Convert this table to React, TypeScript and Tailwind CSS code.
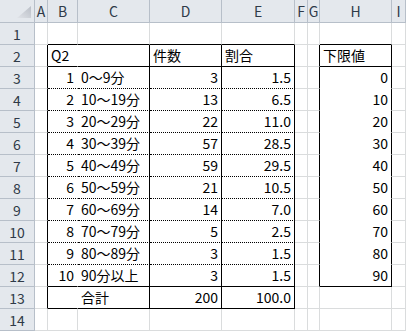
import React from 'react';

type Edge = 'grid' | 'black' | 'dotted' | 'white';

interface CellInfo {
  text?: string;
  align?: 'left' | 'right';
}

const COLS = ['A', 'B', 'C', 'D', 'E', 'F', 'G', 'H', 'I'];

// rows 3..12 of the frequency table
const freq: [string, string, number, string][] = [
  ['1', '0～9分', 3, '1.5'],
  ['2', '10～19分', 13, '6.5'],
  ['3', '20～29分', 22, '11.0'],
  ['4', '30～39分', 57, '28.5'],
  ['5', '40～49分', 59, '29.5'],
  ['6', '50～59分', 21, '10.5'],
  ['7', '60～69分', 14, '7.0'],
  ['8', '70～79分', 5, '2.5'],
  ['9', '80～89分', 3, '1.5'],
  ['10', '90分以上', 3, '1.5'],
];

const lowerBounds = ['0', '10', '20', '30', '40', '50', '60', '70', '80', '90'];

const inTable = (row: number) => row >= 2 && row <= 13;
const inBounds = (row: number) => row >= 2 && row <= 12;

// col: 1=A .. 9=I
function rightEdge(col: number, row: number): Edge {
  if (col === 1 && inTable(row)) return 'black';
  if (col === 2 && inTable(row)) return 'white';
  if ((col === 3 || col === 4 || col === 5) && inTable(row)) return 'black';
  if ((col === 7 || col === 8) && inBounds(row)) return 'black';
  return 'grid';
}

function bottomEdge(col: number, row: number): Edge {
  const tbl = col >= 2 && col <= 5;
  if (tbl) {
    if (row === 1 || row === 2 || row === 12 || row === 13) return 'black';
    if (row >= 3 && row <= 11) return 'dotted';
  }
  if (col === 8) {
    if (row === 1 || row === 2 || row === 12) return 'black';
    if (row >= 3 && row <= 11) return 'white';
  }
  return 'grid';
}

function content(col: number, row: number): CellInfo {
  if (row === 2) {
    if (col === 2) return { text: 'Q2' };
    if (col === 4) return { text: '件数' };
    if (col === 5) return { text: '割合' };
    if (col === 8) return { text: '下限値' };
  }
  if (row >= 3 && row <= 12) {
    const f = freq[row - 3];
    if (col === 2) return { text: f[0], align: 'right' };
    if (col === 3) return { text: f[1] };
    if (col === 4) return { text: String(f[2]), align: 'right' };
    if (col === 5) return { text: f[3], align: 'right' };
    if (col === 8) return { text: lowerBounds[row - 3], align: 'right' };
  }
  if (row === 13) {
    if (col === 3) return { text: '合計' };
    if (col === 4) return { text: '200', align: 'right' };
    if (col === 5) return { text: '100.0', align: 'right' };
  }
  return {};
}

const rightClass: Record<Edge, string> = {
  grid: 'border-r-[#dadcdd]',
  black: 'border-r-black',
  white: 'border-r-white',
  dotted: 'border-r-black',
};

const bottomClass: Record<Edge, string> = {
  grid: 'border-b-[#dadcdd]',
  black: 'border-b-black',
  white: 'border-b-white',
  dotted: 'border-b-black [border-bottom-style:dotted]',
};

const gridCols = 'grid grid-cols-[35px_13px_30px_72px_72px_73px_13px_12px_72px_14px]';

function Cell({ col, row }: { col: number; row: number }) {
  const c = content(col, row);
  const white = (col >= 2 && col <= 5 && inTable(row)) || (col === 8 && inBounds(row));
  return (
    <div
      className={`h-[22px] border-r border-b ${rightClass[rightEdge(col, row)]} ${bottomClass[bottomEdge(col, row)]} ${
        white ? 'bg-white' : 'bg-white'
      } flex items-end pb-[2px] overflow-visible whitespace-nowrap text-[14px] leading-[17px] text-black ${
        c.align === 'right' ? 'justify-end pr-[3px]' : 'justify-start pl-[3px]'
      }`}
    >
      {c.text}
    </div>
  );
}

export default function App() {
  const rows = Array.from({ length: 14 }, (_, i) => i + 1);
  return (
    <div
      className="w-[406px] h-[332px] overflow-hidden bg-white"
      style={{ fontFamily: "'Noto Sans CJK JP', 'Liberation Sans', sans-serif" }}
    >
      {/* column header strip */}
      <div className={`${gridCols} h-[23px]`}>
        <div className="relative bg-[#e4e8ed] border-r border-b border-[#b7bfc9]">
          <svg className="absolute right-[3px] bottom-[4px]" width="14" height="12" viewBox="0 0 14 12">
            <defs>
              <linearGradient id="corner" x1="0" y1="1" x2="1" y2="0">
                <stop offset="0" stopColor="#e0e3e8" />
                <stop offset="1" stopColor="#b9bec6" />
              </linearGradient>
            </defs>
            <polygon points="0,12 14,12 14,0" fill="url(#corner)" />
          </svg>
        </div>
        {COLS.map((l) => (
          <div
            key={l}
            className="bg-[#e4e8ed] border-r border-b border-[#b7bfc9] flex items-center justify-center text-[14px] leading-none text-[#2f3a48] overflow-hidden"
          >
            {l}
          </div>
        ))}
      </div>

      {rows.map((r) => (
        <div key={r} className={gridCols}>
          <div className="h-[22px] bg-[#e4e8ed] border-r border-b border-[#b7bfc9] flex items-center justify-center text-[14px] leading-none text-[#2f3a48]">
            {r}
          </div>
          {COLS.map((_, i) => (
            <Cell key={i} col={i + 1} row={r} />
          ))}
        </div>
      ))}
    </div>
  );
}
